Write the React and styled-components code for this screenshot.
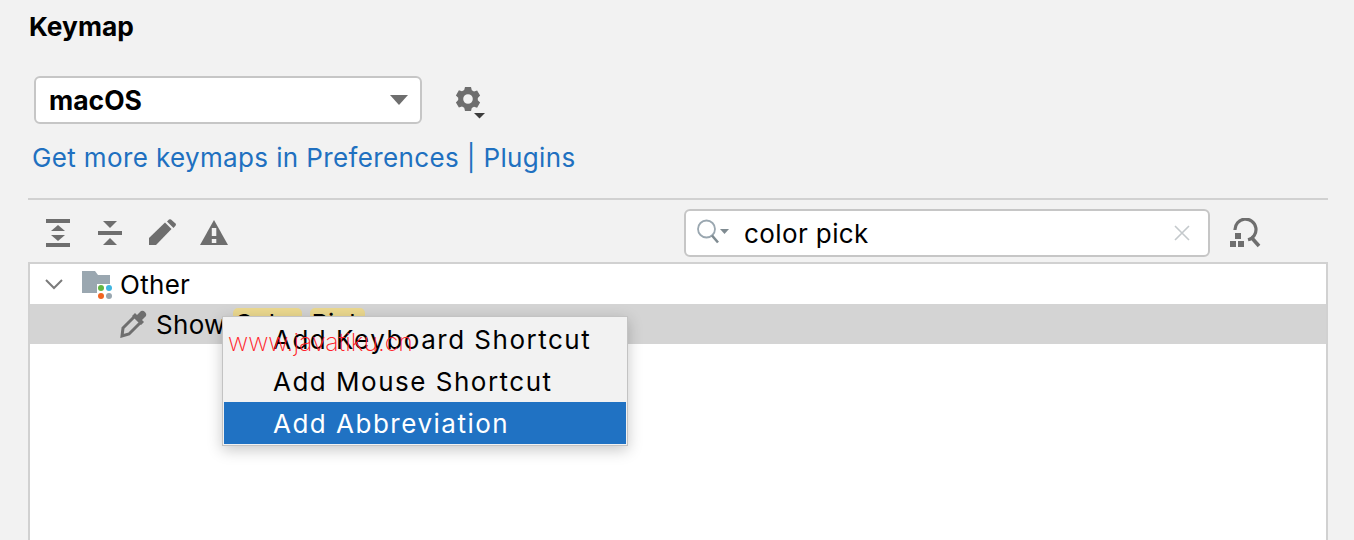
import React from "react";
import styled, { createGlobalStyle } from "styled-components";

const GlobalStyle = createGlobalStyle`
  html, body {
    margin: 0;
    padding: 0;
    height: 100%;
    background: #f2f2f2;
    overflow: hidden;
  }
`;

const GearIcon = () => (
  <svg width="34" height="36" viewBox="0 0 34 36">
    <path
      fill="#6e6e6e"
      fillRule="evenodd"
      d="M11 2h6l.8 3.2 2.2 1.2 3.1-1 3 5.200-2.300 2.300v2.400l2.300 2.300-3 5.200-3.100-1-2.200 1.200L17 26h-6l-.8-3.200-2.200-1.200-3.100 1-3-5.200 2.300-2.300v-2.400L1.900 10.400l3-5.200 3.100 1 2.200-1.200zM14 9.200a4.800 4.800 0 1 0 0 9.600 4.800 4.800 0 0 0 0-9.600z"
    />
    <path fill="#3c3c3c" d="M20 28h11l-5.500 5.500z" />
  </svg>
);

const ExpandIcon = () => (
  <svg width="24" height="28" viewBox="0 0 24 28" fill="#6e6e6e">
    <rect x="0" y="0" width="24" height="4" />
    <rect x="0" y="24" width="24" height="4" />
    <path d="M12 6l7 6H5z" />
    <path d="M5 16h14l-7 6z" />
  </svg>
);

const CollapseIcon = () => (
  <svg width="24" height="28" viewBox="0 0 24 28" fill="#6e6e6e">
    <rect x="0" y="12" width="24" height="4" />
    <path d="M5 2h14l-7 7z" />
    <path d="M12 19l7 7H5z" />
  </svg>
);

const PencilIcon = () => (
  <svg width="28" height="28" viewBox="0 0 28 28" fill="#6e6e6e">
    <path d="M0 26v-7L16 3.500l6.500 6.500L7 26z" />
    <path d="M18 2.500l2-2q1-.5 2 0l4.500 4q1 1 0 2.200l-2 2.300z" />
  </svg>
);

const WarningIcon = () => (
  <svg width="28" height="28" viewBox="0 0 28 28">
    <path fill="#6e6e6e" d="M14 1l14 25H0z" />
    <rect x="11.800" y="9" width="4.500" height="8" fill="#f2f2f2" />
    <rect x="11.800" y="20" width="4.500" height="4" fill="#f2f2f2" />
  </svg>
);

const SearchIcon = () => (
  <svg width="36" height="28" viewBox="0 0 36 28" fill="none">
    <circle cx="10.500" cy="10" r="8.500" stroke="#9aa7b0" strokeWidth="1.800" />
    <path d="M16 16.500l6 7" stroke="#7f8b91" strokeWidth="2.600" />
    <path d="M24 10h9l-4.500 5z" fill="#7f8b91" />
  </svg>
);

const ClearIcon = () => (
  <svg width="16" height="16" viewBox="0 0 16 16" fill="none">
    <path d="M1 1l14 14M15 1L1 15" stroke="#c4c9cc" strokeWidth="1.600" />
  </svg>
);

const FindShortcutIcon = () => (
  <svg width="32" height="30" viewBox="0 0 32 30" fill="none">
    <path d="M5 12a10.500 10.500 0 1 1 13 9.800" stroke="#6e6e6e" strokeWidth="3.200" />
    <path d="M21 19l8 9" stroke="#6e6e6e" strokeWidth="3.600" />
    <g fill="#6e6e6e">
      <rect x="5" y="15" width="6" height="6" />
      <rect x="0" y="23" width="6" height="6" />
      <rect x="8" y="23" width="6" height="6" />
    </g>
  </svg>
);

const ChevronIcon = () => (
  <svg width="18" height="11" viewBox="0 0 18 11" fill="none">
    <path d="M1 1l8 8 8-8" stroke="#7b7b7b" strokeWidth="2" />
  </svg>
);

const FolderIcon = () => (
  <svg width="32" height="30" viewBox="0 0 32 30">
    <path fill="#9aa7b0" d="M0 2h13l3 4h12v18H0z" />
    <rect x="15" y="15" width="17" height="15" fill="#fff" />
    <circle cx="19" cy="19" r="3" fill="#62b543" />
    <circle cx="27" cy="19" r="3" fill="#40b6e0" />
    <circle cx="19" cy="27" r="3" fill="#f26522" />
    <circle cx="27" cy="27" r="3" fill="#9aa7b0" />
  </svg>
);

const PipetteIcon = () => (
  <svg width="28" height="28" viewBox="0 0 28 28" fill="none">
    <path d="M4 18L16 6l6 6L10 24l-7 2z" stroke="#6e6e6e" strokeWidth="3" strokeLinejoin="miter" />
    <path fill="#6e6e6e" d="M13 6l3-3 2 2 4-4q2-1 4 1t1 4l-4 4 2 2-3 3z" />
  </svg>
);

const Page = styled.div`
  position: relative;
  height: 540px;
  padding: 11px 26px 0 28px;
  box-sizing: border-box;
  font-family: Inter, "Open Sans", sans-serif;
  color: #000;
  overflow: hidden;
`;

const Title = styled.h1`
  margin: 0 0 33px 1px;
  font-size: 26.300px;
  line-height: 32px;
  font-weight: 700;
`;

const SchemeRow = styled.div`
  display: flex;
  align-items: center;
  margin-left: 6px;
`;

const SchemeSelect = styled.div`
  width: 388px;
  height: 48px;
  box-sizing: border-box;
  display: flex;
  align-items: center;
  justify-content: space-between;
  padding: 0 12px 0 13px;
  background: #fff;
  border: 2px solid #c6c6c6;
  border-radius: 6px;
  font-size: 26.500px;
  font-weight: 700;
`;

const Caret = styled.span`
  width: 0;
  height: 0;
  border-left: 9.500px solid transparent;
  border-right: 9.500px solid transparent;
  border-top: 10px solid #6e6e6e;
`;

const GearButton = styled.span`
  display: flex;
  margin: 6px 0 0 32px;
`;

const MoreLink = styled.a`
  display: block;
  margin: 17px 0 23px 4px;
  color: #2070c0;
  font-size: 26px;
  line-height: 34px;
  letter-spacing: 0.370px;
`;

const Toolbar = styled.div`
  display: flex;
  align-items: center;
  height: 64px;
  border-top: 2px solid #d1d1d1;
  box-sizing: border-box;
  padding: 4px 0 0 18px;
`;

const ToolIcons = styled.div`
  display: flex;
  align-items: center;
  width: 638px;
`;

const ToolButton = styled.span`
  display: flex;
  margin-left: ${(p) => p.$gap}px;
`;

const SearchBox = styled.div`
  width: 526px;
  height: 48px;
  box-sizing: border-box;
  display: flex;
  align-items: center;
  padding: 0 18px 0 10px;
  background: #fff;
  border: 2px solid #c6c6c6;
  border-radius: 6px;
  font-size: 26px;
  letter-spacing: 0.400px;
`;

const SearchText = styled.span`
  flex: 1;
  margin-left: 12px;
`;

const FindButton = styled.span`
  display: flex;
  margin-left: 20px;
`;

const Tree = styled.div`
  height: 300px;
  border: 2px solid #d1d1d1;
  border-bottom: none;
  background: #fff;
  font-size: 26px;
  letter-spacing: 0.300px;
`;

const Row = styled.div`
  display: flex;
  align-items: center;
  height: ${(p) => p.$height}px;
  padding-left: ${(p) => p.$indent}px;
  background: ${(p) => (p.$selected ? "#d4d4d4" : "transparent")};
`;

const FolderSlot = styled.span`
  display: flex;
  margin: 0 6px 0 19px;
`;

const PipetteSlot = styled.span`
  display: flex;
  margin-right: 9px;
`;

const Mark = styled.span`
  display: inline-block;
  height: 32px;
  line-height: 32px;
  margin-left: ${(p) => p.$gap}px;
  padding: 0 1.500px;
  background: #ecd98f;
  border-radius: 5px;
  letter-spacing: 0;
`;

const Menu = styled.div`
  position: absolute;
  left: 222px;
  top: 316px;
  width: 406px;
  box-sizing: border-box;
  padding: 1px;
  background: #f2f2f2;
  border: 1px solid #c3c3c3;
  box-shadow: 0 4px 14px rgba(0, 0, 0, 0.22);
  font-size: 26px;
  letter-spacing: 1.500px;
`;

const MenuItem = styled.div`
  height: 42px;
  line-height: 44px;
  padding-left: 49px;
  background: ${(p) => (p.$active ? "#2072c3" : "transparent")};
  color: ${(p) => (p.$active ? "#fff" : "#000")};
`;

const Watermark = styled.div`
  position: absolute;
  left: 228px;
  top: 327px;
  color: #ff1f2b;
  font-family: Inter, sans-serif;
  font-size: 24.800px;
  line-height: 30px;
  font-weight: 200;
  pointer-events: none;
`;

export default function App() {
  return (
    <Page>
      <GlobalStyle />
      <Title>Keymap</Title>
      <SchemeRow>
        <SchemeSelect>
          macOS
          <Caret />
        </SchemeSelect>
        <GearButton>
          <GearIcon />
        </GearButton>
      </SchemeRow>
      <MoreLink>Get more keymaps in Preferences | Plugins</MoreLink>
      <Toolbar>
        <ToolIcons>
          <ExpandIcon />
          <ToolButton $gap={28}>
            <CollapseIcon />
          </ToolButton>
          <ToolButton $gap={27}>
            <PencilIcon />
          </ToolButton>
          <ToolButton $gap={23}>
            <WarningIcon />
          </ToolButton>
        </ToolIcons>
        <SearchBox>
          <SearchIcon />
          <SearchText>color pick</SearchText>
          <ClearIcon />
        </SearchBox>
        <FindButton>
          <FindShortcutIcon />
        </FindButton>
      </Toolbar>
      <Tree>
        <Row $height={40} $indent={15}>
          <ChevronIcon />
          <FolderSlot>
            <FolderIcon />
          </FolderSlot>
          Other
        </Row>
        <Row $height={40} $indent={89} $selected>
          <PipetteSlot>
            <PipetteIcon />
          </PipetteSlot>
          Show
          <Mark $gap={7}>Color</Mark>
          <Mark $gap={8}>Pick</Mark>
          er
        </Row>
      </Tree>
      <Menu>
        <MenuItem>Add Keyboard Shortcut</MenuItem>
        <MenuItem>Add Mouse Shortcut</MenuItem>
        <MenuItem $active>Add Abbreviation</MenuItem>
      </Menu>
      <Watermark>www.javatiku.cn</Watermark>
    </Page>
  );
}
